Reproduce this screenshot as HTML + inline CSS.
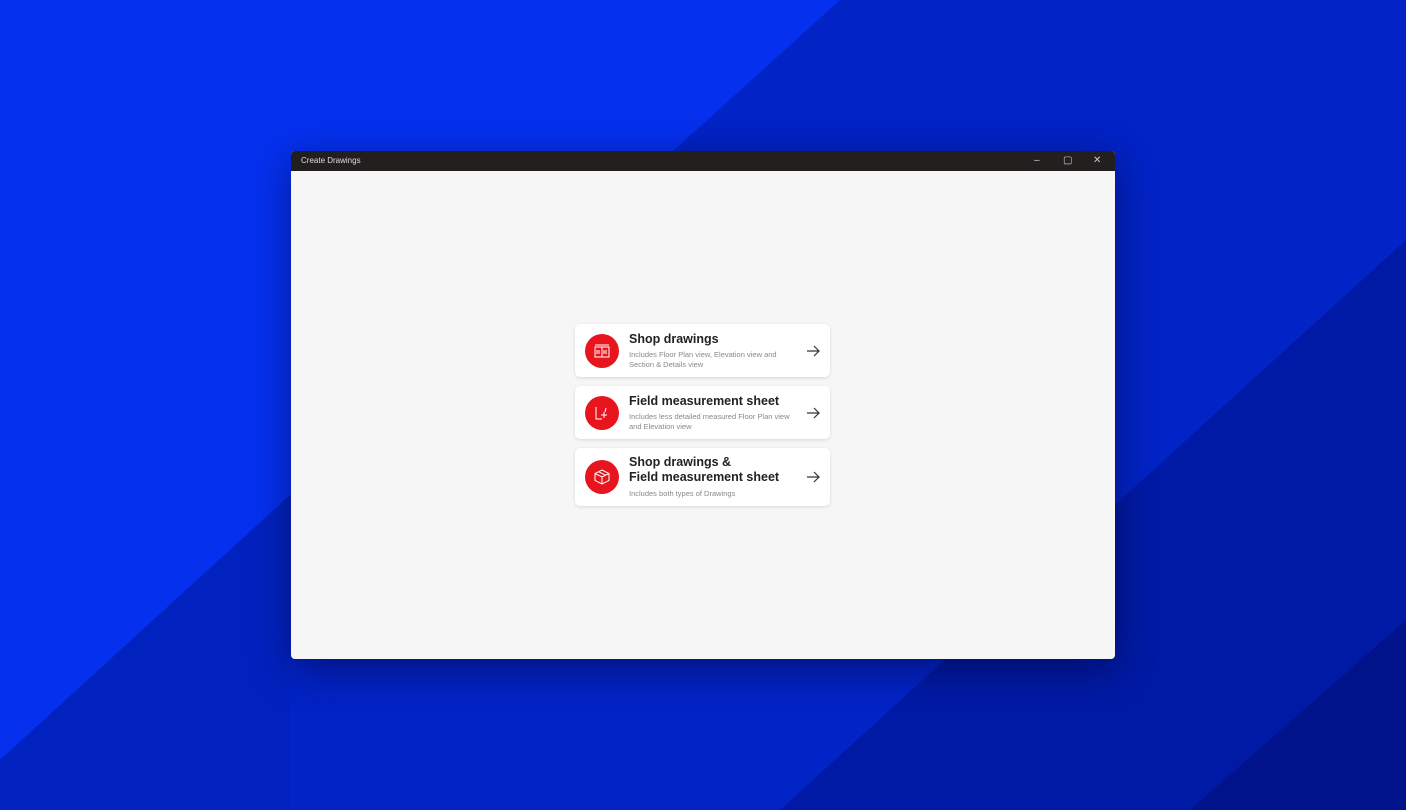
<!DOCTYPE html>
<html><head><style>
body{margin:0;width:1406px;height:810px;overflow:hidden;font-family:"Liberation Sans",sans-serif;position:relative;background:#0530ee}
svg.bg{position:absolute;left:0;top:0}
.win{position:absolute;left:291px;top:151px;width:824px;height:508px;background:#f5f6f5;border-radius:4px;overflow:hidden;box-shadow:0 10px 40px rgba(0,0,30,.45)}
.tb{height:20px;background:#231f1f;color:#ddd;font-size:8px;line-height:20px;padding-left:10px;position:relative}
.tb span{position:absolute;top:0;font-size:10px;color:#ccc}
.card{position:absolute;left:284px;width:255px;background:#fff;border-radius:5px;box-shadow:0 1px 3px rgba(0,0,0,.12)}
.ic{position:absolute;left:10px;width:34px;height:34px;border-radius:50%;background:#e8141e}
.ic svg{position:absolute;left:8px;top:8px}
.t{position:absolute;left:54px;font-weight:bold;font-size:12.5px;color:#222;line-height:15px}
.d{position:absolute;left:54px;font-size:7.5px;color:#888;line-height:10px}
.ar{position:absolute;right:10px;width:14px;height:14px}
</style></head><body>
<svg class="bg" width="1406" height="810">
<polygon points="840,0 1406,0 1406,810 0,810 0,760" fill="#0223c6"/>
<polygon points="0,760 290,495 290,810 0,810" fill="#0222c0"/>
<polygon points="1406,240 1406,810 780,810" fill="#011aa5"/>
<polygon points="1406,620 1406,810 1190,810" fill="#01138a"/>
</svg>
<div class="win">
<div class="tb">Create Drawings
<span style="left:743px">–</span><span style="left:772px">▢</span><span style="left:802px">✕</span></div>
<div class="card" style="top:173px;height:53px">
<div class="ic" style="top:10px"><svg width="18" height="18" viewBox="0 0 18 18" fill="none" stroke="#fff" stroke-width="1"><path d="M2 3h14M2 5h14v10H2zM9 5v10M4 8v4M6 8v4M11 8v4M13 8v4"/></svg></div>
<div class="t" style="top:8px">Shop drawings</div>
<div class="d" style="top:26px">Includes Floor Plan view, Elevation view and<br>Section &amp; Details view</div>
<svg class="ar" style="top:20px" viewBox="0 0 14 14" fill="none" stroke="#333" stroke-width="1.2"><path d="M1 7h12M8 2l5 5-5 5"/></svg>
</div>
<div class="card" style="top:235px;height:53px">
<div class="ic" style="top:10px"><svg width="18" height="18" viewBox="0 0 18 18" fill="none" stroke="#fff" stroke-width="1"><path d="M3 3v12h6M11 8v6M8 11h6M13 4l-1 4"/></svg></div>
<div class="t" style="top:8px">Field measurement sheet</div>
<div class="d" style="top:26px">Includes less detailed measured Floor Plan view<br>and Elevation view</div>
<svg class="ar" style="top:20px" viewBox="0 0 14 14" fill="none" stroke="#333" stroke-width="1.2"><path d="M1 7h12M8 2l5 5-5 5"/></svg>
</div>
<div class="card" style="top:297px;height:58px">
<div class="ic" style="top:12px"><svg width="18" height="18" viewBox="0 0 18 18" fill="none" stroke="#fff" stroke-width="1"><path d="M9 2l7 3.5v7L9 16l-7-3.5v-7zM2 5.5L9 9l7-3.5M9 9v7M5.5 3.7l7 3.5"/></svg></div>
<div class="t" style="top:7px">Shop drawings &amp;<br>Field measurement sheet</div>
<div class="d" style="top:41px">Includes both types of Drawings</div>
<svg class="ar" style="top:22px" viewBox="0 0 14 14" fill="none" stroke="#333" stroke-width="1.2"><path d="M1 7h12M8 2l5 5-5 5"/></svg>
</div>
</div>
</body></html>
